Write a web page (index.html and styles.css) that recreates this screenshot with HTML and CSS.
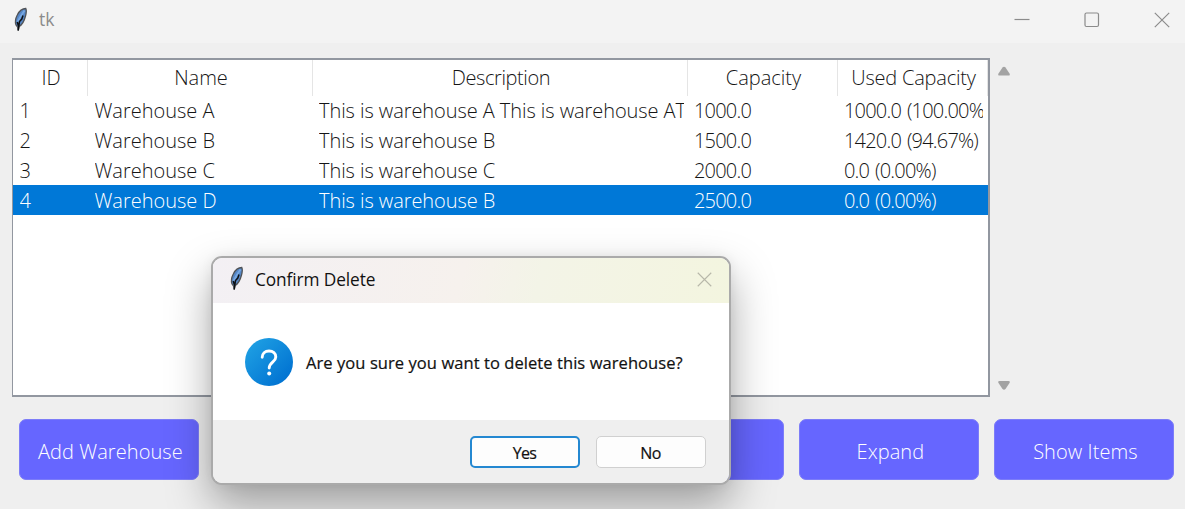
FILE: index.html
```html
<!DOCTYPE html>
<html lang="en">
<head>
<meta charset="utf-8">
<title>tk</title>
<link rel="stylesheet" href="styles.css">
</head>
<body>
<svg class="defs" width="0" height="0" aria-hidden="true">
  <symbol id="feather" viewBox="0 0 16 26">
    <path d="M12.800 1.500C9.500 1.500 6 4.500 4.300 8C2.500 11.500 1.800 15 3 18L4.600 20L5.200 23.500L6 19.500C9 18 11.500 13 12.500 9C13.300 6 13.600 3 12.800 1.500Z" fill="#5586c6" stroke="#505357" stroke-width="1.300"/>
    <path d="M11.500 3.500C9 7 6.500 11 4.500 15" fill="none" stroke="#76a7e2" stroke-width="2"/>
    <path d="M10 8.500L8.800 12L6.500 14.500L5.200 23.500M4.200 15L5.500 19" fill="none" stroke="#0c0f13" stroke-width="1.500"/>
  </symbol>
</svg>
<main class="window">
  <header class="titlebar">
    <svg class="feather"><use href="#feather"/></svg>
    <span class="title">tk</span>
    <div class="controls">
      <svg viewBox="0 0 16 16"><path d="M.5 7.500H15.500"/></svg>
      <svg viewBox="0 0 16 16"><rect x="1" y="1" width="13.500" height="13.500" rx="1.500"/></svg>
      <svg viewBox="0 0 16 16"><path d="M.8 .8L15.200 15.200M15.200 .8L.8 15.200"/></svg>
    </div>
  </header>
  <section class="content">
    <div class="tree">
      <div class="row head"><span>ID</span><span>Name</span><span class="tight">Description</span><span>Capacity</span><span class="snug">Used Capacity</span></div>
      <div class="row"><span>1</span><span>Warehouse A</span><span class="text">This is warehouse A This is warehouse AT</span><span class="number">1000.0</span><span class="number">1000.0 (100.00%)</span></div>
      <div class="row"><span>2</span><span>Warehouse B</span><span class="text">This is warehouse B</span><span class="number">1500.0</span><span class="number">1420.0 (94.67%)</span></div>
      <div class="row"><span>3</span><span>Warehouse C</span><span class="text">This is warehouse C</span><span class="number">2000.0</span><span class="number">0.0 (0.00%)</span></div>
      <div class="row selected"><span>4</span><span>Warehouse D</span><span class="text">This is warehouse B</span><span class="number">2500.0</span><span class="number">0.0 (0.00%)</span></div>
    </div>
    <div class="scrollbar">
      <svg viewBox="0 0 14 11"><path d="M5.500 1.500Q7 0 8.500 1.500L12.500 7.500Q13.500 9.500 11.500 9.500H2.500Q.5 9.500 1.500 7.500Z"/></svg>
      <svg viewBox="0 0 14 11"><path d="M5.500 9Q7 10.500 8.500 9L12.500 3Q13.500 1 11.500 1H2.500Q.5 1 1.500 3Z"/></svg>
    </div>
  </section>
  <footer class="actions">
    <button class="action">Add Warehouse</button>
    <button class="action"></button>
    <button class="action"></button>
    <button class="action"></button>
    <button class="action">Expand</button>
    <button class="action">Show Items</button>
  </footer>
</main>
<section class="dialog">
  <header class="dialog-title">
    <svg class="feather"><use href="#feather"/></svg>
    <span>Confirm Delete</span>
    <svg class="close" viewBox="0 0 16 16"><path d="M.8 .8L15.200 15.200M15.200 .8L.8 15.200"/></svg>
  </header>
  <div class="message">
    <svg class="question" viewBox="0 0 48 48">
      <defs><linearGradient id="blue" x1="0" y1="0" x2="1" y2="1"><stop offset=".1" stop-color="#1e9fe3"/><stop offset=".9" stop-color="#0071d1"/></linearGradient></defs>
      <circle cx="24" cy="24" r="24" fill="url(#blue)"/>
      <path d="M17.200 19.300C17.200 15.500 20 13 24 13C28 13 30.800 15.500 30.800 19C30.800 24 24.200 24.500 24.200 30" fill="none" stroke="#fff" stroke-width="2.900" stroke-linecap="round"/>
      <circle cx="24.200" cy="35.500" r="2" fill="#fff"/>
    </svg>
    <span>Are you sure you want to delete this warehouse?</span>
  </div>
  <div class="choices"><button class="choice primary">Yes</button><button class="choice">No</button></div>
</section>
</body>
</html>
```
FILE: styles.css
```css
* { box-sizing: border-box; }
body { margin: 0; overflow: hidden; font-family: "Open Sans", "Noto Sans", sans-serif; }
button { font-family: inherit; padding: 0; }
.defs { position: absolute; }
.window { width: 1185px; height: 509px; background: #efefef; }
.titlebar { height: 43px; display: flex; align-items: center; padding: 0 15px 4px 13px; background: #f3f3f3; }
.feather { width: 16px; height: 26px; }
.title { margin: -2px 0 0 10px; font-size: 17.500px; color: #8b8b8b; }
.controls { display: flex; gap: 54px; margin-left: auto; }
.controls svg { width: 16px; height: 16px; fill: none; stroke: #8b8b8b; stroke-width: 1.200; }
.content { display: flex; padding: 15px 0 0 12px; height: 355px; }
.tree { width: 978px; height: 339px; background: #fff; border: 2px solid #9297a0; border-width: 2px 2px 2px 1px; font-size: 20px; font-weight: 300; color: #151515; }
.row { display: grid; grid-template-columns: 75px 225px 375px 150px 150px; height: 30px; line-height: 31px; }
.row span { margin: 0 5px 0 6.500px; height: 30px; overflow: hidden; white-space: nowrap; }
.row .text { margin: 0 4px 0 6px; letter-spacing: -.07px; }
.row .number { margin-left: 6px; letter-spacing: -.8px; word-spacing: 1.500px; }
.row.head { height: 35px; line-height: 36px; text-align: center; }
.row.head span { height: 36px; margin: 0; padding-left: 2px; border-right: 1px solid #e5e5e5; }
.row .tight { letter-spacing: -.4px; }
.row .snug { letter-spacing: -.2px; }
.selected { background: #0078d7; color: #fff; }
.scrollbar { display: flex; flex-direction: column; justify-content: space-between; margin-left: 6.500px; padding: 8px 0 5px; height: 338px; }
.scrollbar svg { width: 14px; height: 11px; fill: #a3a3a3; }
.actions { display: flex; gap: 15px; padding: 21px 0 0 19.400px; }
.action { flex: none; width: 180px; height: 61px; border: 1px solid #7d7df8; border-radius: 7px; background: #6666ff; color: #fff; font-size: 20px; font-weight: 300; padding: 3px 0 0 2px; letter-spacing: .07px; }
.dialog { position: absolute; left: 211px; top: 256px; width: 520px; height: 229px; border: 2px solid #aaa; border-radius: 11px; background: #fff; background-clip: padding-box; overflow: hidden; box-shadow: 0 20px 44px rgba(0,0,0,.34), 0 0 12px rgba(0,0,0,.06); }
.dialog-title { display: flex; align-items: center; height: 45px; padding: 0 17px 3px 16px; background: linear-gradient(105deg, #f3f0f4 0%, #f6f1ed 48%, #f3f4e7 63%, #f3f5df 100%); font-size: 17.300px; color: #111; }
.dialog-title span { margin-left: 10px; letter-spacing: -.1px; }
.close { width: 15px; height: 15px; margin-left: auto; fill: none; stroke: #b8b8aa; stroke-width: 1.200; }
.message { display: flex; align-items: center; height: 117px; padding: 0 0 0 31.500px; font-size: 16.500px; color: #111; }
.question { width: 48px; height: 48px; margin-right: 13.500px; }
.message span { padding-top: 2px; white-space: nowrap; letter-spacing: .07px; -webkit-text-stroke: .2px #111; }
.choices { display: flex; justify-content: flex-end; gap: 16px; height: 63px; padding: 16px 23.500px 0; background: #efefef; }
.choice { width: 110px; height: 32px; border: 1px solid #d0d0d0; border-radius: 5px; background: #fdfdfd; font-size: 16px; letter-spacing: -.7px; color: #111; padding-top: 1px; -webkit-text-stroke: .2px #111; }
.primary { border: 2px solid #2488d1; }
```
